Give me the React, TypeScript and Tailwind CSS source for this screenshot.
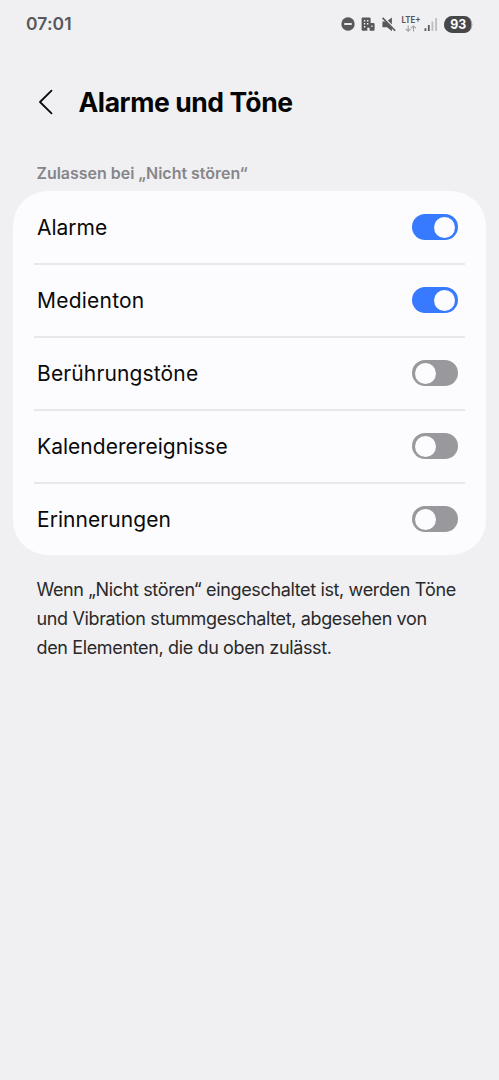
import { useState } from 'react';

interface SoundOption {
    id: string;
    label: string;
    enabled: boolean;
    tracking: string;
}

const OPTIONS: SoundOption[] = [
    { id: 'alarms', label: 'Alarme', enabled: true, tracking: 'tracking-normal' },
    { id: 'media', label: 'Medienton', enabled: true, tracking: 'tracking-[0.22px]' },
    { id: 'touch', label: 'Berührungstöne', enabled: false, tracking: 'tracking-[0.14px]' },
    { id: 'calendar', label: 'Kalenderereignisse', enabled: false, tracking: 'tracking-[0.03px]' },
    { id: 'reminders', label: 'Erinnerungen', enabled: false, tracking: 'tracking-[0.06px]' },
];

function StatusBar() {
    return (
        <div className="flex h-[47px] items-center justify-between pl-[26px] pr-[26px] text-[#58585a]">
            <span className="text-[17.5px] font-semibold leading-none tracking-[0.1px]">07:01</span>
            <svg width="132" height="20" viewBox="341 13 132 20" fill="none">
                {/* Do not disturb */}
                <circle cx="348" cy="23" r="6.7" fill="#58585a" />
                <path d="M344.2 23h7.6" stroke="#f0f0f2" strokeWidth="1.9" />
                {/* Building */}
                <path
                    d="M362.6 16.6h6.8q1.2 0 1.2 1.2v4.2h2.7q1.3 0 1.3 1.3v5.3q0 1.2-1.2 1.2h-3.8v-3h-2.3v3h-4.4q-1.3 0-1.3-1.3V17.8q0-1.2 1-1.2z"
                    fill="#58585a"
                />
                <path
                    d="M363.9 19h1.4v1.4h-1.4zM367 19h1.4v1.4H367zM363.9 22h1.4v1.4h-1.4zM367 22h1.4v1.4H367zM363.9 25h1.4v1.4h-1.4zM371.3 24.6h1.2V26h-1.2z"
                    fill="#f0f0f2"
                />
                {/* Muted speaker */}
                <path d="M391.9 16.4v7.2l-4-4.2z" fill="#58585a" />
                <path d="M382.4 20.4h3.1l6.4 6.5v3.3l-4.8-4h-4.7z" fill="#58585a" />
                <path d="M382.6 16.9l12.6 12.9" stroke="#58585a" strokeWidth="1.6" />
                {/* Mobile data */}
                <text x="401.5" y="22" fill="#58585a" fontSize="8.8" fontWeight="700" textLength="19" lengthAdjust="spacingAndGlyphs">
                    LTE+
                </text>
                <path
                    d="M408.2 24.6v5.5m-2.4-2.2l2.4 2.3 2.4-2.3M413.5 30.5V25m-2.4 2.2l2.4-2.3 2.4 2.3"
                    stroke="#a2a2a5"
                    strokeWidth="1.1"
                />
                {/* Signal bars */}
                <path d="M424.5 27.2h1.8V30h-1.8zM427.9 24h1.8v6h-1.8z" fill="#58585a" />
                <path d="M431.5 20.5h1.8V30h-1.8zM435.2 17h1.8v13h-1.8z" fill="#bdbdc0" />
                {/* Battery */}
                <rect x="444" y="15" width="28.5" height="17" rx="8.5" fill="#a5a5a8" />
                <path d="M452.5 15h11q4.5 0 6.6 3.2 1 2.2 1 5.3t-1 5.3Q468 32 463.5 32h-11a8.5 8.5 0 010-17z" fill="#47474a" />
                <text x="450.3" y="28.2" fill="#fff" fontSize="13" fontWeight="700" textLength="16" lengthAdjust="spacingAndGlyphs">
                    93
                </text>
            </svg>
        </div>
    );
}

function Toggle({ checked, label, onChange }: { checked: boolean; label: string; onChange: () => void }) {
    return (
        <button
            role="switch"
            aria-checked={checked}
            aria-label={label}
            onClick={onChange}
            className={`mb-px flex h-[26px] w-[45.5px] items-center rounded-full px-[2.5px] ${
                checked ? 'justify-end bg-[#387aff]' : 'justify-start bg-[#98989d]'
            }`}
        >
            <span className="size-[21px] rounded-full bg-[#fcfcff]" />
        </button>
    );
}

export default function App() {
    const [options, setOptions] = useState(OPTIONS);

    const toggleOption = (id: string) => {
        setOptions(prev => prev.map(o => (o.id === id ? { ...o, enabled: !o.enabled } : o)));
    };

    return (
        <div className="min-h-screen bg-[#f0f0f2] font-[Inter,Roboto,sans-serif]">
            <StatusBar />

            {/* Header */}
            <header className="flex h-[109px] items-center pl-[38px]">
                <svg width="16" height="26" viewBox="0 0 16 26" fill="none" className="mr-[24.5px]">
                    <path d="M13.5 1.7L2 13l11.5 11.3" stroke="#0a0a0a" strokeWidth="1.8" strokeLinecap="round" strokeLinejoin="round" />
                </svg>
                <h1 className="pt-[2px] text-[26.5px] font-bold leading-none tracking-[-0.42px] text-[#050505]">Alarme und Töne</h1>
            </header>

            <h2 className="flex h-[35px] items-center pb-px pl-[36.5px] text-[16px] font-semibold tracking-[-0.02px] text-[#86868a]">
                Zulassen bei „Nicht stören“
            </h2>

            <section className="mx-[13px] h-[364px] rounded-[35px] bg-[#fcfcff] pl-[21px] pr-[21px] pt-px">
                {options.map((option, i) => (
                    <div
                        key={option.id}
                        className={`flex items-center justify-between pl-[3px] pr-[7.5px] ${
                            i < options.length - 1 ? 'h-[73px] border-b-2 border-[#e8e8eb]' : 'h-[71px]'
                        }`}
                    >
                        <span className={`text-[21px] leading-none text-[#0a0a0a] ${option.tracking}`}>{option.label}</span>
                        <Toggle checked={option.enabled} label={option.label} onChange={() => toggleOption(option.id)} />
                    </div>
                ))}
            </section>

            <p className="pl-[36.5px] pt-5 text-[18px] leading-[29px] tracking-[-0.36px] text-[#29292b]">
                Wenn „Nicht stören“ eingeschaltet ist, werden Töne
                <br />
                und Vibration stummgeschaltet, abgesehen von
                <br />
                den Elementen, die du oben zulässt.
            </p>
        </div>
    );
}
